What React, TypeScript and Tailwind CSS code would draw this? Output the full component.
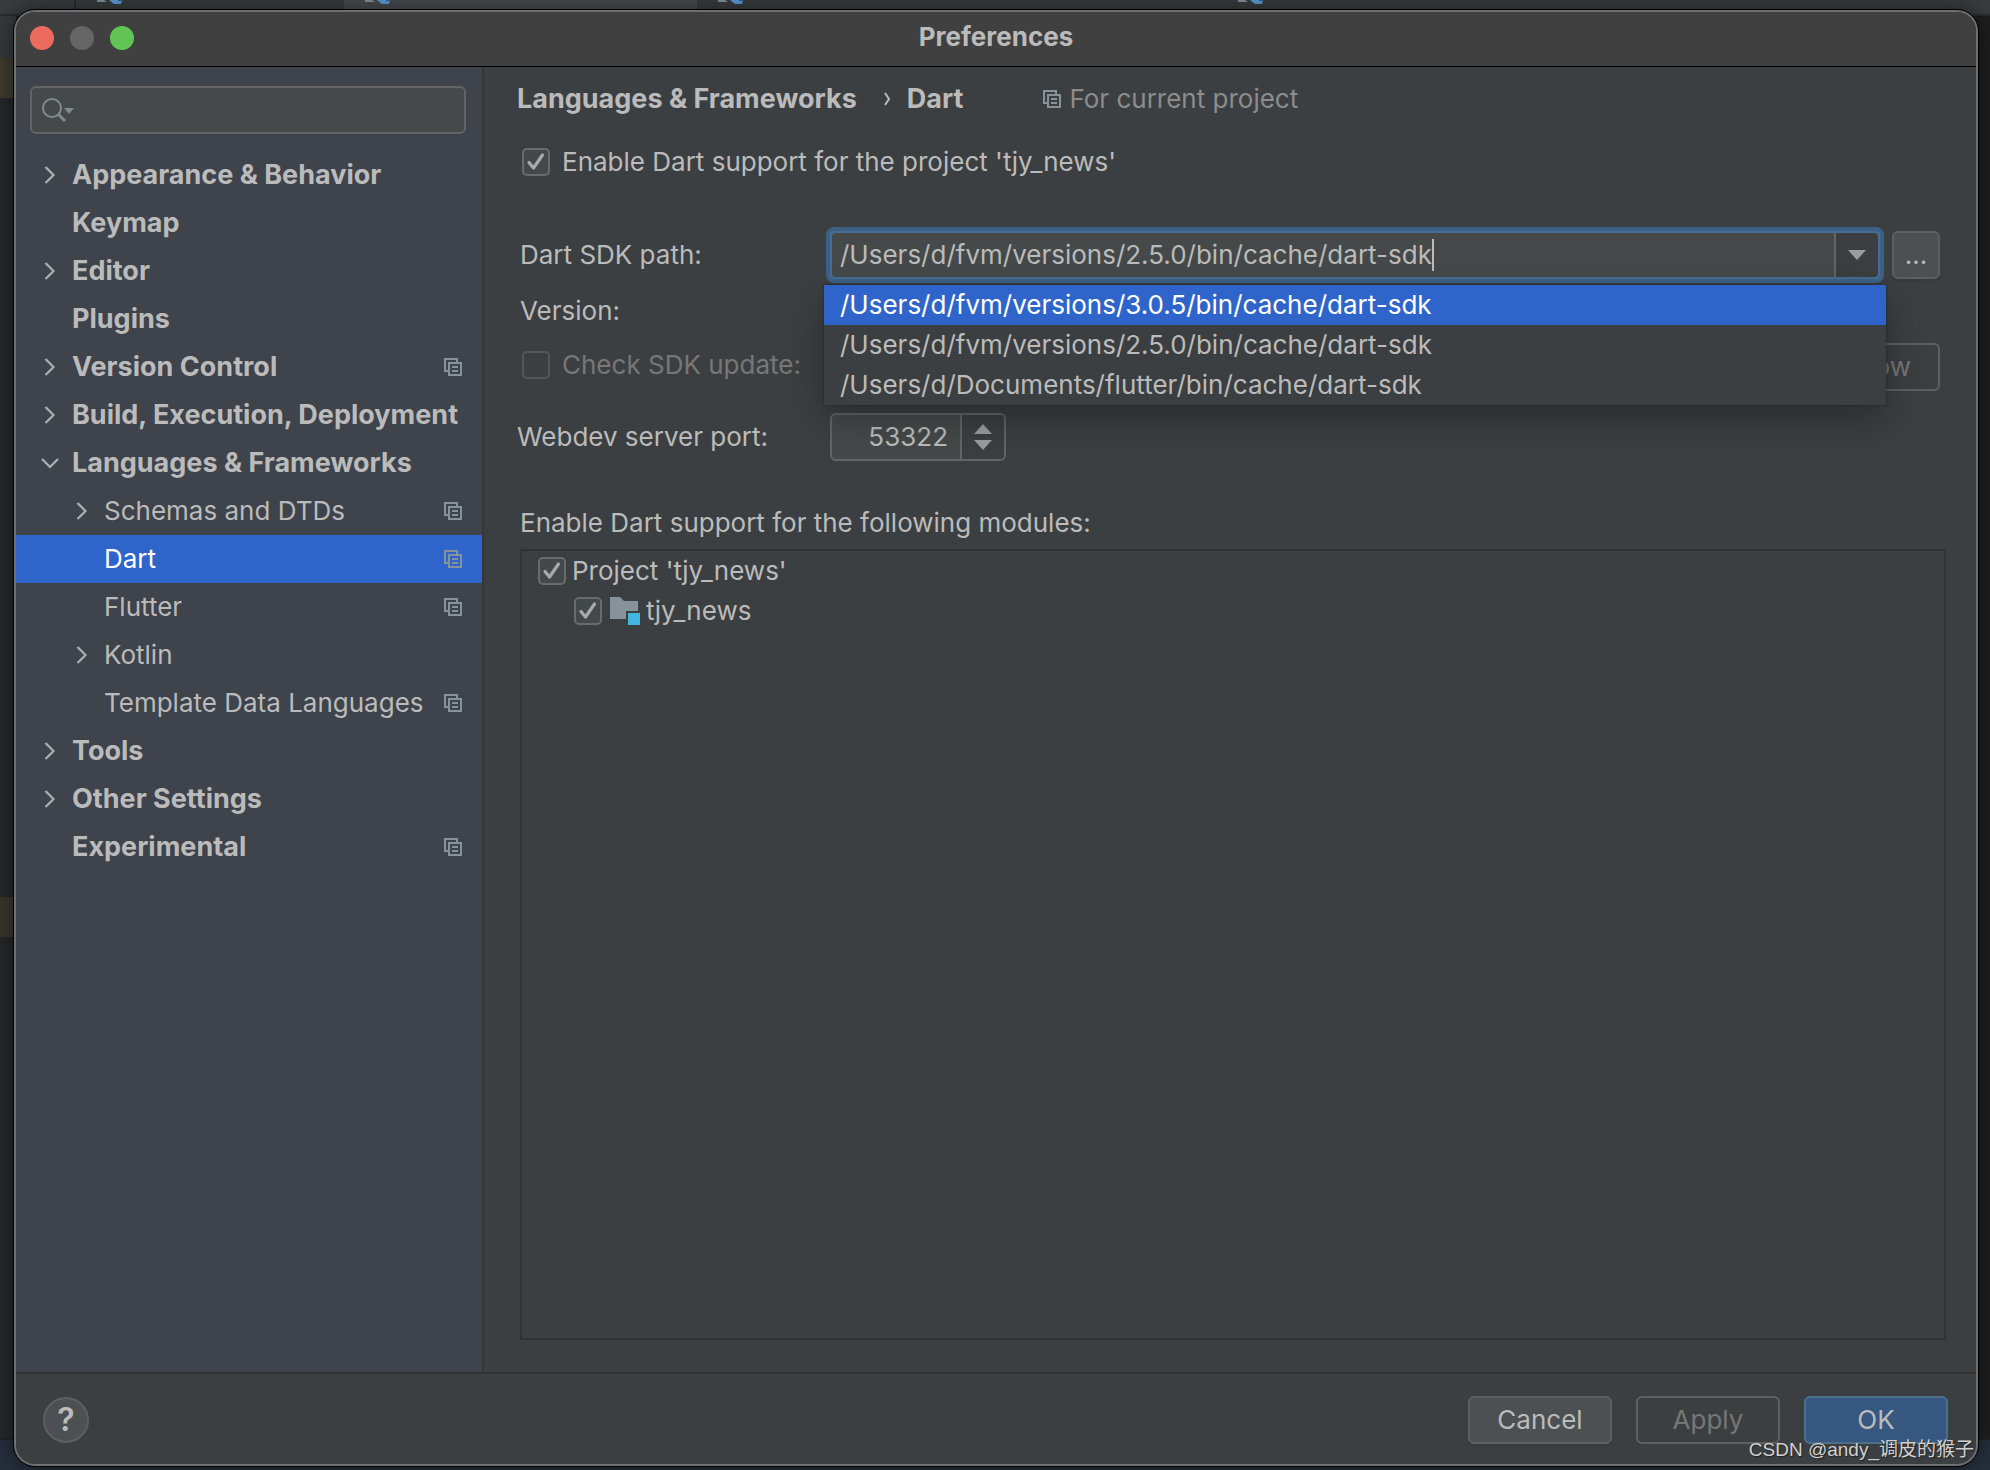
import { clsx } from "clsx";
import { useState } from "react";
import type { ReactNode } from "react";

// ── Data ──────────────────────────────────────────────────────────────────────

interface NavItem {
  label: string;
  level: 0 | 1;
  arrow?: "right" | "down";
  projectScoped?: boolean;
  selected?: boolean;
}

const NAV_ITEMS: NavItem[] = [
  { label: "Appearance & Behavior", level: 0, arrow: "right" },
  { label: "Keymap", level: 0 },
  { label: "Editor", level: 0, arrow: "right" },
  { label: "Plugins", level: 0 },
  { label: "Version Control", level: 0, arrow: "right", projectScoped: true },
  { label: "Build, Execution, Deployment", level: 0, arrow: "right" },
  { label: "Languages & Frameworks", level: 0, arrow: "down" },
  { label: "Schemas and DTDs", level: 1, arrow: "right", projectScoped: true },
  { label: "Dart", level: 1, projectScoped: true, selected: true },
  { label: "Flutter", level: 1, projectScoped: true },
  { label: "Kotlin", level: 1, arrow: "right" },
  { label: "Template Data Languages", level: 1, projectScoped: true },
  { label: "Tools", level: 0, arrow: "right" },
  { label: "Other Settings", level: 0, arrow: "right" },
  { label: "Experimental", level: 0, projectScoped: true },
];

const SDK_PATHS = [
  "/Users/d/fvm/versions/3.0.5/bin/cache/dart-sdk",
  "/Users/d/fvm/versions/2.5.0/bin/cache/dart-sdk",
  "/Users/d/Documents/flutter/bin/cache/dart-sdk",
];

// ── Icons ─────────────────────────────────────────────────────────────────────

function Chevron({ direction }: { direction: "right" | "down" }) {
  return (
    <svg viewBox="0 0 20 20" className="size-5 shrink-0" fill="none" aria-hidden="true">
      <path
        d={direction === "right" ? "M5.5 2l8 8-8 8" : "M2 6l8 8 8-8"}
        stroke="#adb0b3"
        strokeWidth="2.2"
      />
    </svg>
  );
}

function ProjectIcon() {
  return (
    <svg viewBox="0 0 18 18" className="size-[18px] shrink-0" fill="none" aria-hidden="true">
      <path d="M4 13H1V1h12v3" stroke="#87939a" strokeWidth="2" />
      <path d="M5 5h12v12H5z" stroke="#87939a" strokeWidth="2" />
      <path d="M8 9h6M8 13h6" stroke="#87939a" strokeWidth="2" />
    </svg>
  );
}

function SearchIcon() {
  return (
    <svg viewBox="0 0 34 26" className="h-[26px] w-[34px] shrink-0" fill="none" aria-hidden="true">
      <circle cx="10" cy="11" r="9" stroke="#7f8b91" strokeWidth="2" />
      <path d="M16 17l7 7" stroke="#7f8b91" strokeWidth="3" />
      <path d="M22 11h10l-5 6z" fill="#7f8b91" />
    </svg>
  );
}

function ModuleIcon() {
  return (
    <svg viewBox="0 0 30 30" className="size-[30px] shrink-0" aria-hidden="true">
      <path d="M0 1h10l4 4h14v10H16v8H0z" fill="#87939a" />
      <path d="M18 17h12v12H18z" fill="#40b6e0" />
    </svg>
  );
}

// file + Flutter mark, only its lower edge shows under the window
function TabIcon() {
  return (
    <svg viewBox="0 0 28 5" className="h-[5px] w-7" aria-hidden="true">
      <path d="M0 0h7l3 2H0z" fill="#87939a" />
      <path d="M12 0h13l-1 4h-7z" fill="#5c9edb" />
      <path d="M21 0h5l-2 1h-3z" fill="#2f5f9e" />
    </svg>
  );
}

// ── Controls ──────────────────────────────────────────────────────────────────

interface CheckboxProps {
  id: string;
  checked?: boolean;
  disabled?: boolean;
  icon?: ReactNode;
  compact?: boolean;
  children: ReactNode;
}

function Checkbox({
  id,
  checked = false,
  disabled = false,
  compact = false,
  icon,
  children,
}: CheckboxProps) {
  return (
    <div className="flex items-center">
      <span className="grid size-7 shrink-0">
        <input
          id={id}
          type="checkbox"
          defaultChecked={checked}
          disabled={disabled}
          className="peer col-start-1 row-start-1 size-7 appearance-none rounded-[5px] border-2 border-[#6b6b6b] bg-[#43494a] disabled:border-[#545556] disabled:bg-transparent"
        />
        <svg
          viewBox="0 0 28 28"
          className="pointer-events-none invisible col-start-1 row-start-1 size-7 peer-checked:visible"
          fill="none"
          aria-hidden="true"
        >
          <path
            d="M7 14.5l4.5 5.500L20.500 7"
            stroke="#a9a9a9"
            strokeWidth="3.2"
            strokeLinecap="round"
            strokeLinejoin="round"
          />
        </svg>
      </span>
      {icon && <span className="ml-2 flex">{icon}</span>}
      <label
        htmlFor={id}
        className={clsx(compact ? "ml-1.5" : "ml-3", disabled && "text-[#777777]")}
      >
        {children}
      </label>
    </div>
  );
}

function NavRow({ item }: { item: NavItem }) {
  return (
    <li>
      <a
        href="#"
        className={clsx(
          "flex h-12 items-center pr-5 whitespace-nowrap",
          item.level === 0 ? "pl-6 text-[27px] font-bold" : "pl-14",
          item.selected && "bg-[#2f65ca] text-white",
        )}
      >
        <span className="w-8 shrink-0">{item.arrow && <Chevron direction={item.arrow} />}</span>
        <span className="flex-1">{item.label}</span>
        {item.projectScoped && <ProjectIcon />}
      </a>
    </li>
  );
}

// ── Panels ────────────────────────────────────────────────────────────────────

function EditorBackdrop() {
  return (
    <div className="absolute inset-0 flex flex-col bg-[#262829]" aria-hidden="true">
      <div className="flex h-4 border-b-2 border-[#2b2b2b] bg-[#393d3f]">
        <div className="w-[76px] border-r-2 border-[#2b2b2b]" />
        <div className="w-[268px] pl-[21px]">
          <TabIcon />
        </div>
        <div className="w-[353px] bg-[#484d4f] pl-[21px]">
          <TabIcon />
        </div>
        <div className="w-[520px] pl-[21px]">
          <TabIcon />
        </div>
        <div className="pl-[21px]">
          <TabIcon />
        </div>
      </div>
      <div className="flex flex-1">
        <div className="flex w-4 flex-col">
          <div className="h-[42px] bg-[#363a3c]" />
          <div className="h-10 bg-[#403c30]" />
          <div className="h-[799px]" />
          <div className="h-10 bg-[#3a372d]" />
        </div>
        <div className="flex-1 bg-[#1f1f1f]" />
      </div>
      <div className="h-8 border-t-2 border-[#222222] bg-[#262f3c]" />
    </div>
  );
}

function Sidebar() {
  return (
    <nav className="w-[468px] shrink-0 border-r-2 border-[#373637] bg-[#3e434c]" aria-label="Settings">
      <div className="mt-[19px] mr-4 mb-[17px] ml-3.5 flex h-12 items-center rounded-md border-2 border-[#646464] bg-[#45494a] px-2.5">
        <SearchIcon />
        <input type="search" aria-label="Search settings" className="min-w-0 flex-1 outline-none" />
      </div>
      <ul>
        {NAV_ITEMS.map((item) => (
          <NavRow key={item.label} item={item} />
        ))}
      </ul>
    </nav>
  );
}

function SdkPathCombo() {
  const [path, setPath] = useState(SDK_PATHS[1]);

  return (
    <div className="relative min-w-0 flex-1">
      <div className="flex h-14 overflow-hidden rounded-lg border-4 border-[#3d6185] bg-[#466d94] p-0.5">
        <div className="flex min-w-0 flex-1 items-center rounded-l-sm bg-[#45494a] pl-2">
          <input
            id="sdk-path"
            type="text"
            role="combobox"
            aria-expanded="true"
            aria-controls="sdk-paths"
            value={path}
            onChange={(e) => setPath(e.target.value)}
            className="field-sizing-content max-w-full outline-none"
          />
          <span className="h-8 w-0.5 bg-[#bbbbbb]" />
        </div>
        <button
          type="button"
          aria-label="Show SDK paths"
          className="flex w-11 items-center justify-center rounded-r-sm border-l-2 border-[#646464] bg-[#3c3f41]"
        >
          <svg viewBox="0 0 18 10" className="h-2.5 w-[18px]" aria-hidden="true">
            <path d="M0 0h18l-9 10z" fill="#9a9da0" />
          </svg>
        </button>
      </div>
      {/* Suggestions */}
      <ul
        id="sdk-paths"
        role="listbox"
        aria-label="Dart SDK paths"
        className="absolute top-[58px] -right-0.5 -left-0.5 z-10 bg-[#3c3f41] shadow-[0_0_2px_#1c1c1c,0_14px_36px_rgba(0,0,0,0.3)]"
      >
        {SDK_PATHS.map((p, i) => (
          <li
            key={p}
            role="option"
            aria-selected={i === 0}
            className="flex h-10 items-center px-4 whitespace-nowrap aria-selected:bg-[#2f65ca] aria-selected:text-white"
          >
            {p}
          </li>
        ))}
      </ul>
    </div>
  );
}

function DartSettings() {
  return (
    <main className="flex min-w-0 flex-1 flex-col pt-3.5 pr-[30px] pb-8 pl-[33px]">
      <header className="flex h-9 items-center">
        <h1 className="flex items-center text-[27px] font-bold">
          Languages &amp; Frameworks
          <svg viewBox="0 0 8 14" className="mr-4 ml-[26px] h-3.5 w-2" fill="none" aria-hidden="true">
            <path d="M2 1l4 6-4 6" stroke="#bbbbbb" strokeWidth="2" />
          </svg>
          Dart
        </h1>
        <span className="ml-20 flex items-center gap-2 text-[#8c8c8c]">
          <ProjectIcon />
          For current project
        </span>
      </header>

      <div className="mt-[29px] pl-[5px]">
        <Checkbox id="enable-dart" checked>
          Enable Dart support for the project 'tjy_news'
        </Checkbox>
      </div>

      <div className="mt-[49px] flex items-center pr-1.5">
        <label htmlFor="sdk-path" className="w-[309px] shrink-0 pl-[3px]">
          Dart SDK path:
        </label>
        <SdkPathCombo />
        <button
          type="button"
          aria-label="Browse"
          className="ml-2 flex size-12 items-center justify-center rounded-md border-2 border-[#5e6060] bg-[#4c5052] shadow-[0_3px_0_#383a3b]"
        >
          ...
        </button>
      </div>

      <div className="mt-2 flex h-10 items-center pl-[3px]">Version:</div>

      <div className="mt-3 flex items-center justify-between pr-1.5 pl-[5px]">
        <div className="pb-1">
          <Checkbox id="check-update" disabled>
            Check SDK update:
          </Checkbox>
        </div>
        <button
          type="button"
          disabled
          className="h-12 rounded-md border-2 border-[#5e6060] px-[27px] text-[#777777]"
        >
          Check now
        </button>
      </div>

      <div className="mt-[22px] flex items-center">
        <label htmlFor="port" className="w-[313px] shrink-0">
          Webdev server port:
        </label>
        <div className="flex h-12 w-[176px] overflow-hidden rounded-md border-2 border-[#646464] bg-[#45494a]">
          <input
            id="port"
            type="text"
            inputMode="numeric"
            defaultValue="53322"
            className="min-w-0 flex-1 pr-3 text-right outline-none"
          />
          <div className="flex w-11 flex-col items-center justify-center gap-1.5 border-l-2 border-[#646464] bg-[#3c3f41]">
            <button type="button" aria-label="Increase port">
              <svg viewBox="0 0 18 10" className="h-2.5 w-[18px]" aria-hidden="true">
                <path d="M0 10h18l-9-10z" fill="#9a9da0" />
              </svg>
            </button>
            <button type="button" aria-label="Decrease port">
              <svg viewBox="0 0 18 10" className="h-2.5 w-[18px]" aria-hidden="true">
                <path d="M0 0h18l-9 10z" fill="#9a9da0" />
              </svg>
            </button>
          </div>
        </div>
      </div>

      <h2 className="mt-11 flex h-9 items-center pl-[3px]">
        Enable Dart support for the following modules:
      </h2>
      <div className="mt-2 ml-[3px] flex-1 border-2 border-[#323232] px-4">
        <div className="flex h-10 items-center">
          <Checkbox id="project" checked compact>
            Project 'tjy_news'
          </Checkbox>
        </div>
        <div className="flex h-10 items-center pl-9">
          <Checkbox id="module" checked compact icon={<ModuleIcon />}>
            tjy_news
          </Checkbox>
        </div>
      </div>
    </main>
  );
}

export default function App() {
  return (
    <div className="relative flex min-h-screen pt-[9px] pr-[11px] pb-[3px] pl-[13px] font-['Inter','Noto_Sans_CJK_SC',sans-serif] text-[26px] leading-8 text-[#bbbbbb]">
      <EditorBackdrop />

      <div className="relative flex flex-1 flex-col overflow-hidden rounded-[22px] border border-black bg-[#3c3f41] shadow-[0_0_24px_rgba(0,0,0,0.5)]">
        <div className="flex flex-1 flex-col overflow-hidden rounded-[21px] border-2 border-[#6f7072]">
          <div className="grid h-[55px] shrink-0 grid-cols-3 items-center border-b border-black bg-[#404040] px-3.5">
            <div className="flex gap-4 pb-0.5">
              <button type="button" aria-label="Close" className="size-6 rounded-full bg-[#ed6a5e]" />
              <button type="button" aria-label="Minimize" className="size-6 rounded-full bg-[#656565]" />
              <button type="button" aria-label="Zoom" className="size-6 rounded-full bg-[#61c454]" />
            </div>
            <div className="pb-1 text-center font-bold">Preferences</div>
          </div>

          <div className="flex flex-1">
            <Sidebar />
            <DartSettings />
          </div>

          <footer className="flex h-[92px] shrink-0 items-center justify-between border-t-2 border-[#353434] pt-0.5 pr-7 pl-[27px]">
            <button
              type="button"
              aria-label="Help"
              className="flex size-[46px] items-center justify-center rounded-full border-2 border-[#5e6060] bg-[#4c5052] text-[32px] font-semibold"
            >
              ?
            </button>
            <div className="flex gap-6">
              <button
                type="button"
                className="h-12 w-36 rounded-md border-2 border-[#5e6060] bg-[#4c5052] shadow-[0_3px_0_#383a3b]"
              >
                Cancel
              </button>
              <button
                type="button"
                disabled
                className="h-12 w-36 rounded-md border-2 border-[#5e6060] text-[#777777]"
              >
                Apply
              </button>
              <button
                type="button"
                className="h-12 w-36 rounded-md border-2 border-[#4c708c] bg-[#365880]"
              >
                OK
              </button>
            </div>
          </footer>
        </div>
      </div>

      <div className="absolute right-4 bottom-1.5 font-['Liberation_Sans','Noto_Sans_CJK_SC',sans-serif] text-[19px] leading-7 text-[#d0d0d0] [text-shadow:1px_1px_1px_#222]">
        CSDN @andy_调皮的猴子
      </div>
    </div>
  );
}
